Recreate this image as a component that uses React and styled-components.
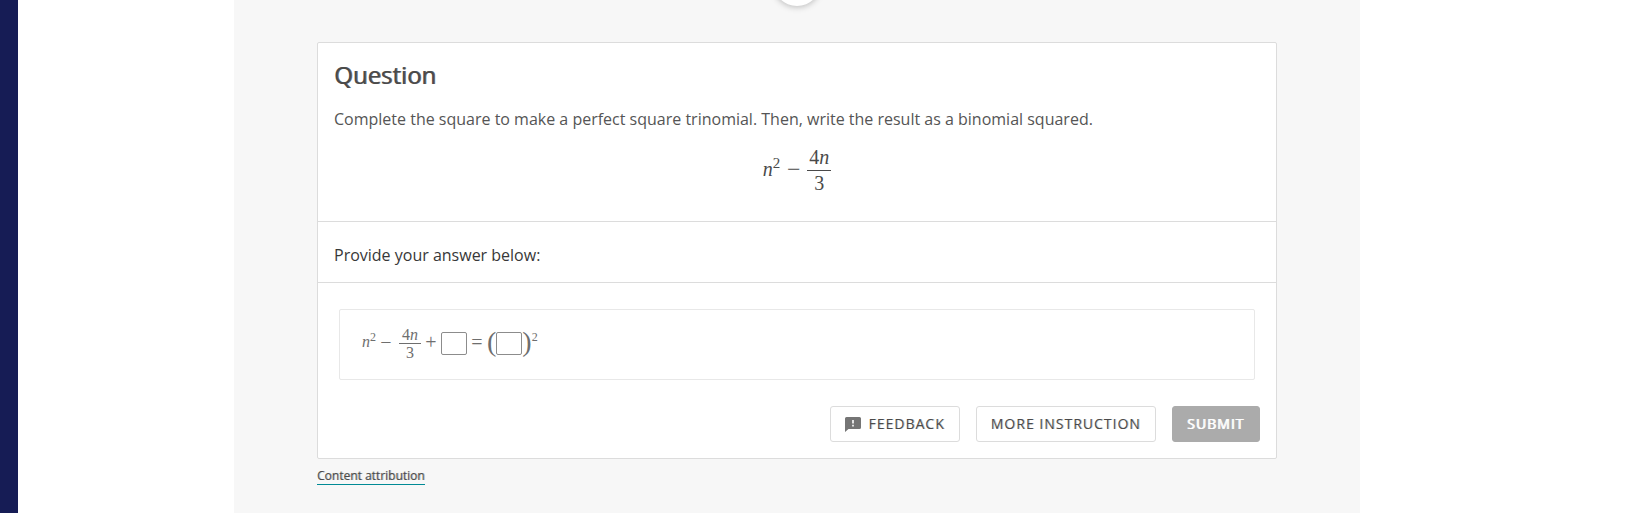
import { useState } from "react";
import styled, { createGlobalStyle, ThemeProvider } from "styled-components";

const theme = {
  navy: "#161c55",
  panel: "#f7f7f7",
  border: "#dcdcdc",
  lightBorder: "#e8e8e8",
  text: "#4a4a4a",
  body: "#555",
  dark: "#383838",
  math: "#6e6e6e",
  muted: "#ababab",
  teal: "#008a95",
};

const Fraction = ({ top, bottom, small }) => (
  <FractionBox $small={small}>
    <Numerator $small={small}>{top}</Numerator>
    <span>{bottom}</span>
  </FractionBox>
);

const FeedbackIcon = () => (
  <svg width="16" height="16" viewBox="0 0 16 16" aria-hidden="true">
    <path
      d="M1.5 1h13A1.5 1.5 0 0 1 16 2.500v9a1.500 1.500 0 0 1-1.500 1.500H3.500L0 16V2.500A1.500 1.500 0 0 1 1.500 1z"
      fill="#757575"
    />
    <path d="M7.200 4h1.600v3.500H7.200zM7.200 8.800h1.600v1.600H7.200z" fill="#fff" />
  </svg>
);

const App = () => {
  const [constant, setConstant] = useState("");
  const [binomial, setBinomial] = useState("");

  return (
    <ThemeProvider theme={theme}>
      <GlobalStyle />
      <Page>
        <SideBar />
        <Main>
          <Panel>
            <RoundButton type="button" aria-label="Scroll up" />
            <Card>
              <Prompt>
                <Title>Question</Title>
                <Text>
                  Complete the square to make a perfect square trinomial. Then,
                  write the result as a binomial squared.
                </Text>
                <Formula>
                  <Term>
                    <i>n</i>
                    <Power>2</Power>
                  </Term>
                  <Operator>−</Operator>
                  <Fraction
                    top={
                      <>
                        4<i>n</i>
                      </>
                    }
                    bottom="3"
                  />
                </Formula>
              </Prompt>
              <Instruction>Provide your answer below:</Instruction>
              <AnswerArea>
                <AnswerBox>
                  <Term>
                    <i>n</i>
                    <Power $small>2</Power>
                  </Term>
                  <Operator $small>−</Operator>
                  <Fraction
                    small
                    top={
                      <>
                        4<i>n</i>
                      </>
                    }
                    bottom="3"
                  />
                  <Operator $small>+</Operator>
                  <Blank
                    aria-label="Constant term"
                    value={constant}
                    onChange={(e) => setConstant(e.target.value)}
                  />
                  <Operator $small>=</Operator>
                  <Paren>(</Paren>
                  <Blank
                    aria-label="Binomial"
                    value={binomial}
                    onChange={(e) => setBinomial(e.target.value)}
                  />
                  <Paren>)</Paren>
                  <Term>
                    <Power $small>2</Power>
                  </Term>
                </AnswerBox>
              </AnswerArea>
              <Actions>
                <Button type="button">
                  <FeedbackIcon />
                  FEEDBACK
                </Button>
                <Button type="button">MORE INSTRUCTION</Button>
                <SubmitButton type="submit" disabled>
                  SUBMIT
                </SubmitButton>
              </Actions>
            </Card>
            <Attribution href="#attribution">Content attribution</Attribution>
          </Panel>
        </Main>
      </Page>
    </ThemeProvider>
  );
};

const GlobalStyle = createGlobalStyle`
  * {
    box-sizing: border-box;
  }

  body {
    margin: 0;
    background: #fff;
    color: ${theme.text};
    font-family: "Open Sans", sans-serif;
    font-size: 16px;
    line-height: 24px;
  }
`;

const Page = styled.div`
  display: flex;
  min-height: 100vh;
`;

const SideBar = styled.aside`
  flex: 0 0 18px;
  background: ${({ theme }) => theme.navy};
`;

const Main = styled.main`
  flex: 1;
  display: flex;
  justify-content: center;
  padding-right: 67px;
`;

const Panel = styled.div`
  position: relative;
  flex: 0 1 1126px;
  padding: 42px 83px 24px;
  overflow: hidden;
  background: ${({ theme }) => theme.panel};
`;

const RoundButton = styled.button`
  position: absolute;
  top: -42px;
  left: calc(50% - 24px);
  width: 48px;
  height: 48px;

  border: 0;
  border-radius: 50%;
  background: #fff;
  box-shadow: 0 1px 6px rgba(0, 0, 0, 0.25);
`;

const Card = styled.section`
  border: 1px solid ${({ theme }) => theme.border};
  border-radius: 2px;
  background: #fff;
`;

const Prompt = styled.div`
  padding: 16px 16px 25px;
  border-bottom: 1px solid ${({ theme }) => theme.border};
`;

const Title = styled.h1`
  margin: 0 0 16px;

  font-size: 24px;
  font-weight: 400;
  line-height: 32px;
  text-shadow: 1px 0 0 rgba(74, 74, 74, 0.8);
`;

const Text = styled.p`
  margin: 0 0 14px;
  color: ${({ theme }) => theme.body};
`;

const Formula = styled.div`
  display: flex;
  align-items: center;
  justify-content: center;

  font-family: "Liberation Serif", serif;
  font-size: 20px;
`;

const Term = styled.span`
  padding-bottom: 3px;
`;

const Power = styled.sup`
  position: relative;
  top: ${({ $small }) => ($small ? "-6px" : "-8px")};

  font-size: ${({ $small }) => ($small ? "12px" : "15px")};
  line-height: 0;
  vertical-align: baseline;
`;

const Operator = styled.span`
  width: ${({ $small }) => ($small ? "20px" : "27px")};
  padding-bottom: 3px;

  font-size: ${({ $small }) => ($small ? "20px" : "24px")};
  text-align: center;
`;

const FractionBox = styled.span`
  display: flex;
  flex-direction: column;
  margin-left: ${({ $small }) => ($small ? "3px" : "0")};

  line-height: ${({ $small }) => ($small ? "17px" : "25px")};
  text-align: center;
`;

const Numerator = styled.span`
  padding: 0 ${({ $small }) => ($small ? "3px" : "2px")};
  border-bottom: 1px solid currentColor;
`;

const Instruction = styled.div`
  padding: 21px 16px 15px;
  border-bottom: 1px solid ${({ theme }) => theme.border};
  color: ${({ theme }) => theme.dark};
`;

const AnswerArea = styled.div`
  padding: 26px 21px;
`;

const AnswerBox = styled.div`
  display: flex;
  align-items: center;
  min-height: 71px;
  padding: 15px 22px 17px;

  border: 1px solid ${({ theme }) => theme.lightBorder};
  border-radius: 2px;
  color: ${({ theme }) => theme.math};
  font-family: "Liberation Serif", serif;
`;

const Blank = styled.input`
  width: 26px;
  height: 23px;
  padding: 0 2px;

  border: 1px solid #8c8c8c;
  border-radius: 2px;
  background: #fff;
  font: inherit;
`;

const Paren = styled.span`
  padding-bottom: 4px;
  font-size: 28px;
`;

const Actions = styled.div`
  display: flex;
  justify-content: flex-end;
  gap: 16px;
  padding: 0 16px 16px;
`;

const Button = styled.button`
  display: flex;
  align-items: center;
  gap: 8px;
  height: 36px;
  padding: 0 14px 2px;

  border: 1px solid ${({ theme }) => theme.border};
  border-radius: 3px;
  background: #fff;
  color: ${({ theme }) => theme.text};
  font-family: inherit;
  font-size: 14px;
  font-weight: 500;
  letter-spacing: 1px;
  text-shadow: 1px 0 0 rgba(74, 74, 74, 0.3);

  svg {
    margin-top: 2px;
  }
`;

const SubmitButton = styled(Button)`
  padding: 0 15px 2px 14px;

  border-color: ${({ theme }) => theme.muted};
  background: ${({ theme }) => theme.muted};
  color: #fff;
  text-shadow: 1px 0 0 #fff;
`;

const Attribution = styled.a`
  display: inline-block;
  margin-top: 8px;

  border-bottom: 1px solid ${({ theme }) => theme.teal};
  color: ${({ theme }) => theme.text};
  font-size: 12px;
  font-weight: 400;
  line-height: 17px;
  text-decoration: none;
  text-shadow: 1px 0 0 rgba(74, 74, 74, 0.4);
`;

export default App;
